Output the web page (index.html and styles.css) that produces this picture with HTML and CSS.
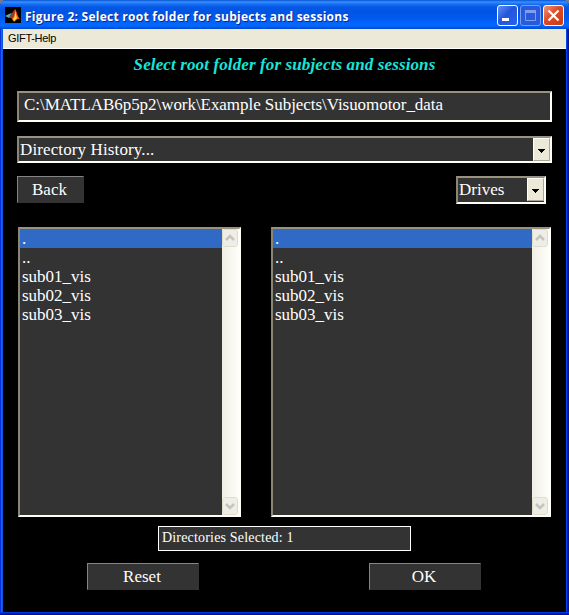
FILE: index.html
```html
<!DOCTYPE html>
<html lang="en">
<head>
<meta charset="utf-8">
<title>Figure 2: Select root folder for subjects and sessions</title>
<link rel="stylesheet" href="styles.css">
</head>
<body>
<main class="window">
  <header class="titlebar">
    <svg class="logo" width="16" height="16" viewBox="0 0 16 16">
      <path fill="#000" d="M0 0h16v16H0z"/>
      <path fill="#5ba7b5" d="M0 9l4-2 3-1-3 5z"/>
      <path fill="#963f24" d="M4 11l3-5 3-4 1 5-3 6-2-2z"/>
      <path fill="#f4511c" d="M10 2c2 2 2 7 5 10-3-1-4 2-6 3l-2-3c2-2 3-5 3-10z"/>
      <path fill="#ffe13a" d="M10 4l2 7-3 3-1-2c2-2 2-4 2-8z"/>
    </svg>
    <h1 class="caption">Figure 2: Select root folder for subjects and sessions</h1>
    <div class="controls">
      <svg class="control minimize" viewBox="0 0 19 19"><path fill="#fff" d="M4 12h7v3H4z"/></svg>
      <svg class="control maximize" viewBox="0 0 19 19"><path fill="none" stroke="#829df0" d="M4.500 4.500h10v10h-10z"/><path fill="#829df0" d="M4 4h11v3H4z"/></svg>
      <svg class="control close" viewBox="0 0 19 19"><path fill="none" stroke="#fff" stroke-width="2.300" d="M4.500 4.500l10 10m0-10l-10 10"/></svg>
    </div>
  </header>
  <nav class="menu"><span class="menu-item">GIFT-Help</span></nav>
  <section class="figure">
    <h2 class="heading"><span class="heading-text">Select root folder for subjects and sessions</span></h2>
    <div class="path sunken"><span class="path-text">C:\MATLAB6p5p2\work\Example Subjects\Visuomotor_data</span></div>
    <div class="select history sunken">
      <span class="history-text">Directory History...</span>
      <svg class="arrow" viewBox="0 0 15 21"><path d="M4 10h7v1h-1v1H9v1H8v1H7v-1H6v-1H5v-1H4z"/></svg>
    </div>
    <div class="row">
      <button class="button back">Back</button>
      <div class="select drives sunken">
        <span class="drives-text">Drives</span>
        <svg class="arrow" viewBox="0 0 15 21"><path d="M4 10h7v1h-1v1H9v1H8v1H7v-1H6v-1H5v-1H4z"/></svg>
      </div>
    </div>
    <div class="lists">
      <div class="list left sunken">
        <ul class="items"><li class="item selected">.</li><li class="item">..</li><li class="item">sub01_vis</li><li class="item">sub02_vis</li><li class="item">sub03_vis</li></ul>
        <div class="scrollbar">
          <svg class="scroll" viewBox="0 0 14 16"><path d="M3 10l4-4 4 4"/></svg>
          <svg class="scroll" viewBox="0 0 14 16"><path d="M3 6l4 4 4-4"/></svg>
        </div>
      </div>
      <div class="list right sunken">
        <ul class="items"><li class="item selected">.</li><li class="item">..</li><li class="item">sub01_vis</li><li class="item">sub02_vis</li><li class="item">sub03_vis</li></ul>
        <div class="scrollbar">
          <svg class="scroll" viewBox="0 0 14 16"><path d="M3 10l4-4 4 4"/></svg>
          <svg class="scroll" viewBox="0 0 14 16"><path d="M3 6l4 4 4-4"/></svg>
        </div>
      </div>
    </div>
    <div class="status"><span class="status-text">Directories Selected: 1</span></div>
    <footer class="actions">
      <button class="button action">Reset</button>
      <button class="button action">OK</button>
    </footer>
  </section>
</main>
</body>
</html>
```
FILE: styles.css
```css
* { box-sizing: border-box; }
body { margin: 0; background: #777b8b; overflow: hidden; }
.window {
  width: 569px; height: 615px; padding: 0 3px 3px; display: flex; flex-direction: column;
  border-radius: 6px 6px 0 0; overflow: hidden;
  background: linear-gradient(#0048f0, #0019b8 50%, #00138c) 0 100% / 100% 3px no-repeat,
    linear-gradient(90deg, #0831d9 0 1px, #1664f0 1px 2px, #0855dd 2px 3px, #0046ee 3px 567px, #0019b8 567px 568px, #00138c 568px);
  color: #fff; font-family: "Liberation Serif", serif; font-size: 17px;
}
.titlebar {
  height: 29px; margin: 0 -3px; padding: 3px 5px 0; display: flex; flex: none;
  background: linear-gradient(#0753d4 0, #398fff 2px, #1970f4 4px, #0559e6 7px, #0054e3 12px, #0059ee 18px, #0267ff 24px, #0267ff 26px, #0048cc 29px);
}
.logo { margin-top: 4px; flex: none; }
.caption {
  margin: 4px 0 0 4px; font: bold 12px/19px "Open Sans", sans-serif;
  letter-spacing: .26px; white-space: nowrap; text-shadow: 1px 1px #0a2b8c;
}
.controls { display: flex; gap: 2px; margin: 2px 0 0 auto; }
.control { width: 21px; height: 21px; border: 1px solid #fff; border-radius: 3px; background: linear-gradient(135deg, #6690f2, #2456db 45%, #2463ef); }
.maximize { border-color: #799cf0; background: #285bdc; }
.close { background: linear-gradient(135deg, #f0977c, #df4925 45%, #c93c10); }
.menu { height: 20px; flex: none; padding-left: 5px; background: #ece9d8; border-bottom: 1px solid #fff; color: #000; font: 11px/18px "Liberation Sans", sans-serif; }
.menu-item { letter-spacing: -.3px; }
.figure { flex: 1; background: #000; padding: 0 14px; }
.heading { height: 42px; margin: 0; padding-top: 5px; text-align: center; font: italic bold 17px/22px "Liberation Serif", serif; color: #17e5dc; }
.heading-text { letter-spacing: .12px; }
.sunken { background: #333; border: 2px solid #fffff5; border-top-color: #99927f; border-left-color: #8b8674; }
.path { width: 535px; height: 31px; padding-left: 5px; line-height: 23px; }
.path-text { letter-spacing: -.05px; }
.select { display: flex; justify-content: space-between; height: 27px; line-height: 23px; padding-left: 1px; }
.history { width: 535px; margin-top: 14px; }
.history-text { letter-spacing: .12px; }
.arrow { width: 17px; height: 23px; background: #ece9d8; border: 1px solid #fff; border-right-color: #aca899; border-bottom-color: #aca899; }
.row { display: flex; justify-content: space-between; width: 529px; margin-top: 13px; }
.button { appearance: none; height: 27px; padding: 0 2px 0 0; border: 1px solid #333; border-top-color: #858585; border-left-color: #858585; border-radius: 0; background: #333; color: #fff; font: 17px/24px "Liberation Serif", serif; }
.back { width: 67px; }
.drives { width: 90px; height: 28px; }
.lists { display: flex; gap: 30px; margin: 23px 0 0 1px; }
.list { display: flex; height: 290px; }
.left { width: 223px; }
.right { width: 280px; }
.items { flex: 1; margin: 0; padding: 0; list-style: none; }
.item { height: 19px; padding-left: 2px; line-height: 19px; }
.selected { background: #316ac5; }
.scrollbar { width: 17px; display: flex; flex-direction: column; justify-content: space-between; background: linear-gradient(90deg, #f0efe4, #fefefb); }
.scroll { width: 16px; height: 18px; border: 1px solid #fff; outline: 1px solid #dedccb; outline-offset: -1px; border-radius: 3px; background: #efeee6; }
.scroll path { fill: none; stroke: #c5c5bd; stroke-width: 2.500; }
.status { width: 253px; height: 25px; margin: 9px 0 0 141px; padding-left: 3px; border: 1px solid #fff; background: #333; font-size: 14px; line-height: 21px; }
.status-text { letter-spacing: .18px; }
.actions { display: flex; gap: 170px; margin: 12px 0 0 70px; }
.action { width: 112px; }
```
